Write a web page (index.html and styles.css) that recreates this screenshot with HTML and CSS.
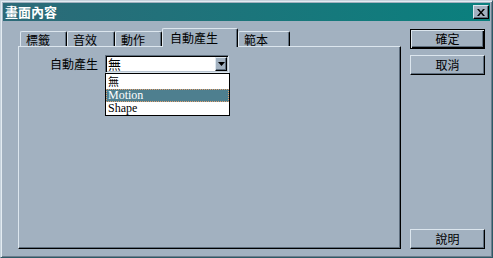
FILE: index.html
```html
<!DOCTYPE html>
<html lang="zh-Hant">

<head>
    <meta charset="utf-8">
    <title>畫面內容</title>
    <link rel="stylesheet" href="styles.css">
</head>

<body>
    <div class="window">
        <div class="titlebar">
            <span class="title">畫面內容</span>
            <span class="close">
                <svg width="8" height="7" viewBox="0 0 8 7">
                    <path d="M0 0h2l2 2.5L6 0h2L5 3.5 8 7H6L4 4.5 2 7H0l3-3.5z" fill="#000" />
                </svg>
            </span>
        </div>
        <div class="client">
            <div class="sheet">
                <div class="tabs">
                    <div class="tab t1">標籤</div>
                    <div class="tab t2">音效</div>
                    <div class="tab t3">動作</div>
                    <div class="tab active">自動產生</div>
                    <div class="tab t5">範本</div>
                </div>
                <div class="panel">
                    <div class="field">
                        <span class="label">自動產生</span>
                        <div class="combo">
                            <span class="value">無</span>
                            <span class="drop">
                                <svg width="7" height="4" viewBox="0 0 7 4">
                                    <path d="M0 0h7L3.5 4z" fill="#000" />
                                </svg>
                            </span>
                            <!-- 펼쳐진 목록 -->
                            <ul class="list">
                                <li class="zh">無</li>
                                <li class="selected">Motion</li>
                                <li>Shape</li>
                            </ul>
                        </div>
                    </div>
                </div>
            </div>
            <div class="buttons">
                <div class="btn default">確定</div>
                <div class="btn">取消</div>
                <div class="btn help">說明</div>
            </div>
        </div>
    </div>
</body>

</html>
```

FILE: styles.css
```css
body {
    margin: 0;
    font-family: "Noto Sans CJK TC", "Noto Sans CJK SC", sans-serif;
    font-size: 12px;
}

.window {
    width: 493px;
    height: 258px;
    box-sizing: border-box;
    background: #a2b1c0;
    border: 1px solid;
    border-color: #c6d2dc #2e5a66 #2e5a66 #c6d2dc;
    box-shadow: inset 1px 1px #e4ecf2, inset -1px -1px #6c7c8c;
    padding: 2px;
    display: flex;
    flex-direction: column;
}

.titlebar {
    height: 18px;
    background: linear-gradient(to right, #2d6a78, #0a807e);
    display: flex;
    align-items: center;
    justify-content: space-between;
}

.title {
    color: #fff;
    font-weight: bold;
    font-size: 13px;
    line-height: 16px;
    padding-left: 2px;
}

.close {
    width: 16px;
    height: 14px;
    box-sizing: border-box;
    margin-right: 1px;
    background: #a2b1c0;
    border: 1px solid;
    border-color: #dce6ee #000 #000 #dce6ee;
    box-shadow: inset -1px -1px #5e6e7e;
    display: flex;
    align-items: center;
    justify-content: center;
}

.client {
    flex: 1;
    display: flex;
    gap: 9px;
    padding: 7px 5px 6px 15px;
}

.sheet {
    width: 383px;
    display: flex;
    flex-direction: column;
}

.tabs {
    height: 18px;
    display: flex;
    align-items: flex-end;
    padding-left: 2px;
}

.tab {
    height: 15px;
    box-sizing: border-box;
    border-top: 1px solid #dce6ee;
    border-left: 1px solid #dce6ee;
    border-right: 1px solid #000;
    border-radius: 2px 2px 0 0;
    box-shadow: inset -1px 0 #5e6e7e;
    padding: 1px 0 0 5px;
    line-height: 13px;
    white-space: nowrap;
}

.t1 {
    width: 47px;
}

.t2 {
    width: 48px;
}

.t3 {
    width: 47px;
}

.t5 {
    width: 52px;
}

.tab.active {
    width: 76px;
    height: 19px;
    margin-bottom: -1px;
    position: relative;
    z-index: 1;
    background: #a2b1c0;
    padding: 2px 0 0 7px;
}

.panel {
    flex: 1;
    border-top: 1px solid #dce6ee;
    border-left: 1px solid #dce6ee;
    border-right: 1px solid #000;
    border-bottom: 1px solid #000;
    box-shadow: inset -1px -1px #5e6e7e;
    padding: 8px 0 0 31px;
}

.field {
    display: flex;
    align-items: center;
    gap: 7px;
}

.label {
    line-height: 18px;
}

.combo {
    position: relative;
    width: 124px;
    height: 18px;
    box-sizing: border-box;
    background: #fff;
    border: 1px solid;
    border-color: #5e6e7e #dce6ee #dce6ee #5e6e7e;
    box-shadow: inset 1px 1px #000, inset -1px -1px #b8c4d0;
    display: flex;
    align-items: center;
}

.value {
    padding-left: 2px;
    font-size: 13px;
    line-height: 14px;
}

.drop {
    margin-left: auto;
    margin-right: 1px;
    width: 12px;
    height: 14px;
    box-sizing: border-box;
    background: #a2b1c0;
    border: 1px solid;
    border-color: #dce6ee #000 #000 #dce6ee;
    box-shadow: inset -1px -1px #5e6e7e;
    display: flex;
    align-items: center;
    justify-content: center;
}

.list {
    position: absolute;
    top: 17px;
    left: -1px;
    width: 125px;
    box-sizing: border-box;
    margin: 0;
    padding: 0;
    list-style: none;
    background: #fff;
    border: 1px solid #000;
    font-family: "Liberation Serif", "Noto Sans CJK TC", serif;
    font-size: 12px;
    z-index: 2;
}

.list li {
    height: 13px;
    line-height: 13px;
    padding-left: 2px;
}

.list li.zh {
    height: 15px;
    line-height: 15px;
    font-size: 11px;
    font-family: "Noto Sans CJK TC", sans-serif;
}

.list li.selected {
    background: #4e7f8f;
    color: #fff;
    outline: 1px dotted #e0a070;
    outline-offset: -1px;
}

.buttons {
    width: 75px;
    display: flex;
    flex-direction: column;
    gap: 6px;
    padding-top: 1px;
}

.btn {
    height: 20px;
    box-sizing: border-box;
    background: #a2b1c0;
    border: 1px solid;
    border-color: #dce6ee #000 #000 #dce6ee;
    box-shadow: inset -1px -1px #5e6e7e;
    text-align: center;
    line-height: 17px;
}

.btn.default {
    border-color: #000;
    box-shadow: inset 1px 1px #dce6ee, inset -1px -1px #000, inset -2px -2px #5e6e7e;
}

.btn.help {
    margin-top: auto;
}
```
